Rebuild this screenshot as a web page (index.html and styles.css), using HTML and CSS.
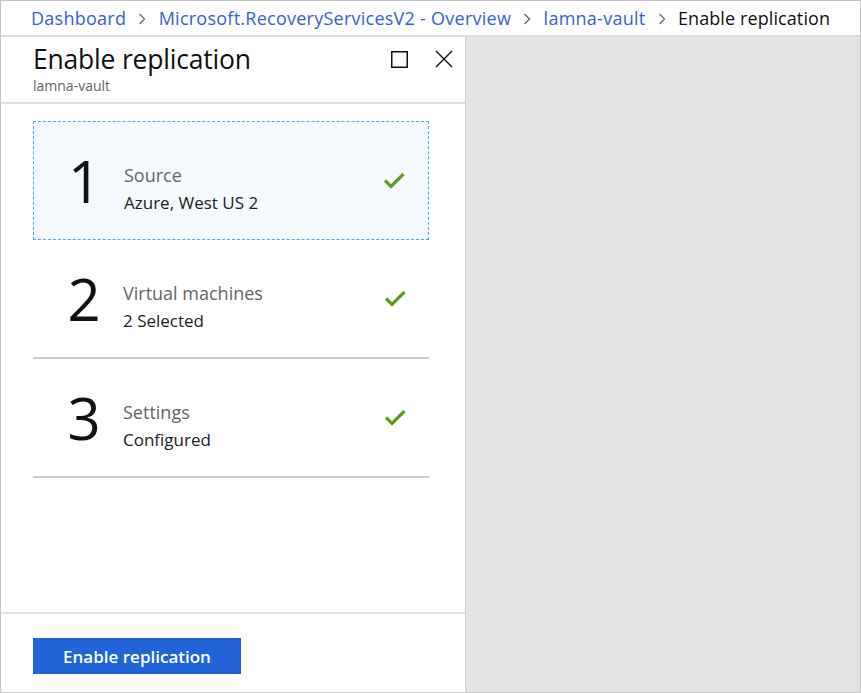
FILE: index.html
```html
<!DOCTYPE html>
<html lang="en">
<head>
<meta charset="utf-8">
<title>Enable replication</title>
<link rel="stylesheet" href="styles.css">
</head>
<body>
<div class="frame">
  <nav class="crumbs">
    <a class="crumb">Dashboard</a>
    <svg class="chev" width="8" height="12" viewBox="0 0 8 12"><polyline points="1.5,1 6.5,6 1.5,11" fill="none" stroke="#666" stroke-width="1.3"/></svg>
    <a class="crumb">Microsoft.RecoveryServicesV2 - Overview</a>
    <svg class="chev" width="8" height="12" viewBox="0 0 8 12"><polyline points="1.5,1 6.5,6 1.5,11" fill="none" stroke="#666" stroke-width="1.3"/></svg>
    <a class="crumb">lamna-vault</a>
    <svg class="chev" width="8" height="12" viewBox="0 0 8 12"><polyline points="1.5,1 6.5,6 1.5,11" fill="none" stroke="#666" stroke-width="1.3"/></svg>
    <span class="crumb current">Enable replication</span>
  </nav>
  <div class="main">
    <section class="panel">
      <header class="panel-head">
        <div class="titles">
          <h1 class="title">Enable replication</h1>
          <div class="subtitle">lamna-vault</div>
        </div>
        <div class="actions">
          <svg class="icon" width="18" height="18" viewBox="0 0 18 18"><rect x="1.75" y="1.75" width="15.5" height="15.5" fill="none" stroke="#111" stroke-width="1.5"/></svg>
          <svg class="icon" width="18" height="18" viewBox="0 0 18 18"><path d="M1 1 L17 17 M17 1 L1 17" fill="none" stroke="#111" stroke-width="1.4"/></svg>
        </div>
      </header>
      <div class="steps">
        <div class="step active">
          <div class="num">1</div>
          <div class="info">
            <div class="step-title">Source</div>
            <div class="step-value">Azure, West US 2</div>
          </div>
          <svg class="check" width="22" height="18" viewBox="0 0 22 18"><polyline points="2,8.5 8,14.5 20.5,2" fill="none" stroke="#5c9e22" stroke-width="3.2"/></svg>
        </div>
        <div class="step">
          <div class="num">2</div>
          <div class="info">
            <div class="step-title">Virtual machines</div>
            <div class="step-value">2 Selected</div>
          </div>
          <svg class="check" width="22" height="18" viewBox="0 0 22 18"><polyline points="2,8.5 8,14.5 20.5,2" fill="none" stroke="#5c9e22" stroke-width="3.2"/></svg>
        </div>
        <div class="step">
          <div class="num">3</div>
          <div class="info">
            <div class="step-title">Settings</div>
            <div class="step-value">Configured</div>
          </div>
          <svg class="check" width="22" height="18" viewBox="0 0 22 18"><polyline points="2,8.5 8,14.5 20.5,2" fill="none" stroke="#5c9e22" stroke-width="3.2"/></svg>
        </div>
      </div>
      <footer class="panel-foot">
        <button class="primary">Enable replication</button>
      </footer>
    </section>
    <div class="canvas"></div>
  </div>
</div>
</body>
</html>
```
FILE: styles.css
```css
* { box-sizing: border-box; }
html, body { margin: 0; padding: 0; }
body {
  font-family: "Open Sans", "Noto Sans", sans-serif;
  color: #111;
  background: #fff;
}
.frame {
  width: 861px;
  height: 693px;
  border: 1px solid #c4c4c4;
  display: flex;
  flex-direction: column;
  overflow: hidden;
}
.crumbs {
  height: 36px;
  flex: none;
  display: flex;
  align-items: center;
  padding-left: 30px;
  border-bottom: 2px solid #dcdcdc;
  font-size: 18px;
  letter-spacing: 0.25px;
  gap: 12.25px;
  white-space: nowrap;
}
.crumb { color: #3463d4; text-decoration: none; }
.crumb.current { color: #111; letter-spacing: 0.1px; }
.chev { flex: none; margin-top: 1px; }
.main {
  flex: 1;
  display: flex;
  min-height: 0;
}
.panel {
  width: 465px;
  flex: none;
  background: #fff;
  border-right: 1px solid #d2d2d2;
  display: flex;
  flex-direction: column;
}
.canvas { flex: 1; background: #e4e4e4; }
.panel-head {
  display: flex;
  justify-content: space-between;
  align-items: flex-start;
  padding: 4px 12px 0 32px;
  height: 67px;
  border-bottom: 2px solid #e0e0e0;
  flex: none;
}
.title {
  margin: 0;
  font-size: 26.5px;
  font-weight: 400;
  line-height: 37px;
  letter-spacing: -0.2px;
}
.subtitle {
  font-size: 14px;
  color: #666;
  line-height: 16px;
}
.actions {
  display: flex;
  gap: 27px;
  padding-top: 9px;
}
.steps {
  flex: 1;
  padding: 17px 36px 0 32px;
}
.step {
  display: flex;
  align-items: center;
  height: 119px;
  border-bottom: 2px solid #cdcdcd;
  padding-right: 23px;
}
.step.active {
  border: 1px dashed #47ade3;
  background: #f4f9fd;
}
.num {
  width: 90px;
  flex: none;
  font-size: 58px;
  font-weight: 500;
  line-height: 60px;
  padding-left: 12px;
  text-align: center;
}
.active .num { padding-left: 11px; }
.info { flex: 1; padding-top: 17px; }
.step-title {
  font-size: 18px;
  color: #666;
  line-height: 28px;
}
.step-value {
  font-size: 17px;
  color: #222;
  line-height: 28px;
}
.check { flex: none; }
.panel-foot {
  flex: none;
  border-top: 2px solid #e0e0e0;
  padding: 24px 32px 18px;
}
.primary {
  width: 208px;
  height: 36px;
  background: #2064d8;
  color: #fff;
  border: none;
  font-family: "Open Sans", "Noto Sans", sans-serif;
  font-size: 17px;
  font-weight: 600;
  padding: 0;
}
```
